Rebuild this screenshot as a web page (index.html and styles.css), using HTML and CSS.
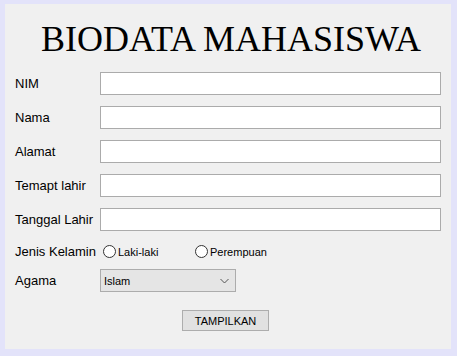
FILE: index.html
```html
<!DOCTYPE html>
<html>
<head>
<meta charset="utf-8">
<link rel="stylesheet" href="styles.css">
</head>
<body>
<div class="frame">
  <div class="panel">
    <h1 class="title">BIODATA MAHASISWA</h1>
    <div class="form">
      <label class="lbl">NIM</label><div class="field"></div>
      <label class="lbl">Nama</label><div class="field"></div>
      <label class="lbl">Alamat</label><div class="field"></div>
      <label class="lbl">Temapt lahir</label><div class="field"></div>
      <label class="lbl">Tanggal Lahir</label><div class="field"></div>
      <label class="lbl shift">Jenis Kelamin</label>
      <div class="radios shift">
        <span class="radio first"><span class="dot"></span>Laki-laki</span>
        <span class="radio"><span class="dot"></span>Perempuan</span>
      </div>
      <label class="lbl">Agama</label>
      <div class="combo"><span>Islam</span>
        <svg class="chev" width="9" height="6" viewBox="0 0 9 6"><path d="M0.5 1 L4.5 5 L8.5 1" fill="none" stroke="#555" stroke-width="1"/></svg>
      </div>
    </div>
    <div class="actions"><button class="btn">TAMPILKAN</button></div>
  </div>
</div>
</body>
</html>
```
FILE: styles.css
```css
html, body {
  margin: 0;
  padding: 0;
}
body {
  width: 457px;
  height: 356px;
  background: #e3e3fa;
  font-family: "Liberation Sans", Arial, sans-serif;
  color: #000;
}
.frame {
  padding: 4px 6px 7px 5px;
}
.panel {
  background: #f0f0f0;
  height: 345px;
  box-sizing: border-box;
  padding: 13px 10px 0 10px;
}
.title {
  margin: 0 0 11px 0;
  font-family: "Liberation Serif", "Times New Roman", serif;
  font-weight: normal;
  font-size: 36px;
  line-height: 44px;
  height: 44px;
  text-align: center;
  padding-left: 6px;
}
.form {
  display: grid;
  grid-template-columns: 85px 1fr;
  grid-template-rows: repeat(5, 23px) 16px 23px;
  row-gap: 11px;
  align-items: center;
}
.shift {
  margin-top: 3px;
}
.lbl {
  font-size: 13px;
  white-space: nowrap;
}
.field {
  height: 23px;
  box-sizing: border-box;
  border: 1px solid #ababab;
  background: #fff;
}
.radios {
  display: flex;
  align-items: center;
  font-size: 11px;
  padding-left: 3px;
}
.radio {
  display: flex;
  align-items: center;
  gap: 2px;
}
.radio.first {
  width: 92px;
}
.dot {
  width: 13px;
  height: 13px;
  box-sizing: border-box;
  border: 1px solid #333;
  border-radius: 50%;
  background: #fff;
}
.combo {
  width: 136px;
  height: 23px;
  box-sizing: border-box;
  border: 1px solid #acacac;
  background: #e5e5e5;
  display: flex;
  align-items: center;
  justify-content: space-between;
  padding: 0 6px 0 3px;
  font-size: 11px;
}
.chev {
  display: block;
}
.actions {
  display: flex;
  justify-content: center;
  padding-right: 5px;
  margin-top: 18px;
}
.btn {
  width: 87px;
  height: 21px;
  box-sizing: border-box;
  border: 1px solid #adadad;
  background: #e1e1e1;
  font-family: "Liberation Sans", Arial, sans-serif;
  font-size: 11px;
  color: #000;
  padding: 0;
}
```
